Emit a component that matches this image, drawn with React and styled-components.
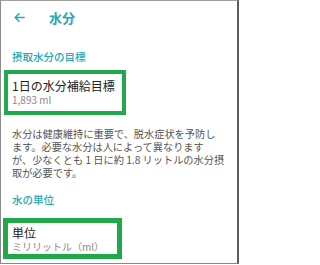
import React from "react";
import styled, { createGlobalStyle } from "styled-components";

const Global = createGlobalStyle`
  html, body { margin: 0; padding: 0; background: #fff; }
  body { font-family: "Noto Sans CJK JP", "Noto Sans", sans-serif; }
  * { box-sizing: border-box; }
`;

const Frame = styled.div`
  width: 239px;
  height: 264px;
  border-top: 1px solid #a0a0a0;
  border-left: 1px solid #8a8a8a;
  border-right: 2px solid #5a5a5a;
  border-bottom: 1px solid #8a8a8a;
  background: #fff;
  display: flex;
  flex-direction: column;
  overflow: hidden;
`;

const Header = styled.div`
  height: 33px;
  display: flex;
  align-items: center;
  padding-left: 13px;
  gap: 24px;
  color: #26a8b6;
`;

const Title = styled.div`
  font-size: 13px;
  font-weight: 700;
  line-height: 16px;
  color: #26a8b6;
`;

const SectionTitle = styled.div`
  margin: ${(p) => p.$top}px 0 0 11px;
  font-size: 10.5px;
  line-height: 14px;
  font-weight: 500;
  color: #26a8b6;
`;

const Highlight = styled.div`
  margin: ${(p) => p.$top}px 0 0 ${(p) => p.$left}px;
  width: ${(p) => p.$width}px;
  border: ${(p) => p.$border}px solid #20a84b;
  padding: ${(p) => p.$padTop}px 0 ${(p) => p.$padBottom}px ${(p) => p.$padLeft}px;
  display: flex;
  flex-direction: column;
`;

const ItemTitle = styled.div`
  font-size: 12px;
  line-height: ${(p) => p.$lh}px;
  color: #222;
  white-space: nowrap;
`;

const ItemValue = styled.div`
  font-size: ${(p) => p.$size}px;
  line-height: ${(p) => p.$lh}px;
  color: #8a8a8a;
  white-space: nowrap;
`;

const Paragraph = styled.p`
  margin: 12px 0 0 11px;
  font-size: 10.2px;
  line-height: 13px;
  color: #555;
  white-space: nowrap;
`;

const BackArrow = () => (
  <svg width="11" height="9" viewBox="0 0 11 9" fill="none">
    <path
      d="M10.2 4.5H1.2M5 0.8L1.2 4.5L5 8.2"
      stroke="#26a8b6"
      strokeWidth="1.6"
      strokeLinecap="round"
      strokeLinejoin="round"
    />
  </svg>
);

export default function App() {
  return (
    <>
      <Global />
      <Frame>
        <Header>
          <BackArrow />
          <Title>水分</Title>
        </Header>
        <SectionTitle $top={16}>摂取水分の目標</SectionTitle>
        <Highlight $top={6} $left={3} $width={122} $border={4} $padTop={4} $padBottom={5} $padLeft={4}>
          <ItemTitle $lh={15}>1日の水分補給目標</ItemTitle>
          <ItemValue $size={10} $lh={13}>1,893 ml</ItemValue>
        </Highlight>
        <Paragraph>
          水分は健康維持に重要で、脱水症状を予防し
          <br />
          ます。必要な水分は人によって異なります
          <br />
          が、少なくとも 1 日に約 1.8 リットルの水分摂
          <br />
          取が必要です。
        </Paragraph>
        <SectionTitle $top={14}>水の単位</SectionTitle>
        <Highlight $top={11} $left={2} $width={119} $border={5} $padTop={3} $padBottom={0} $padLeft={4}>
          <ItemTitle $lh={14}>単位</ItemTitle>
          <ItemValue $size={10} $lh={14}>ミリリットル（ml）</ItemValue>
        </Highlight>
      </Frame>
    </>
  );
}
